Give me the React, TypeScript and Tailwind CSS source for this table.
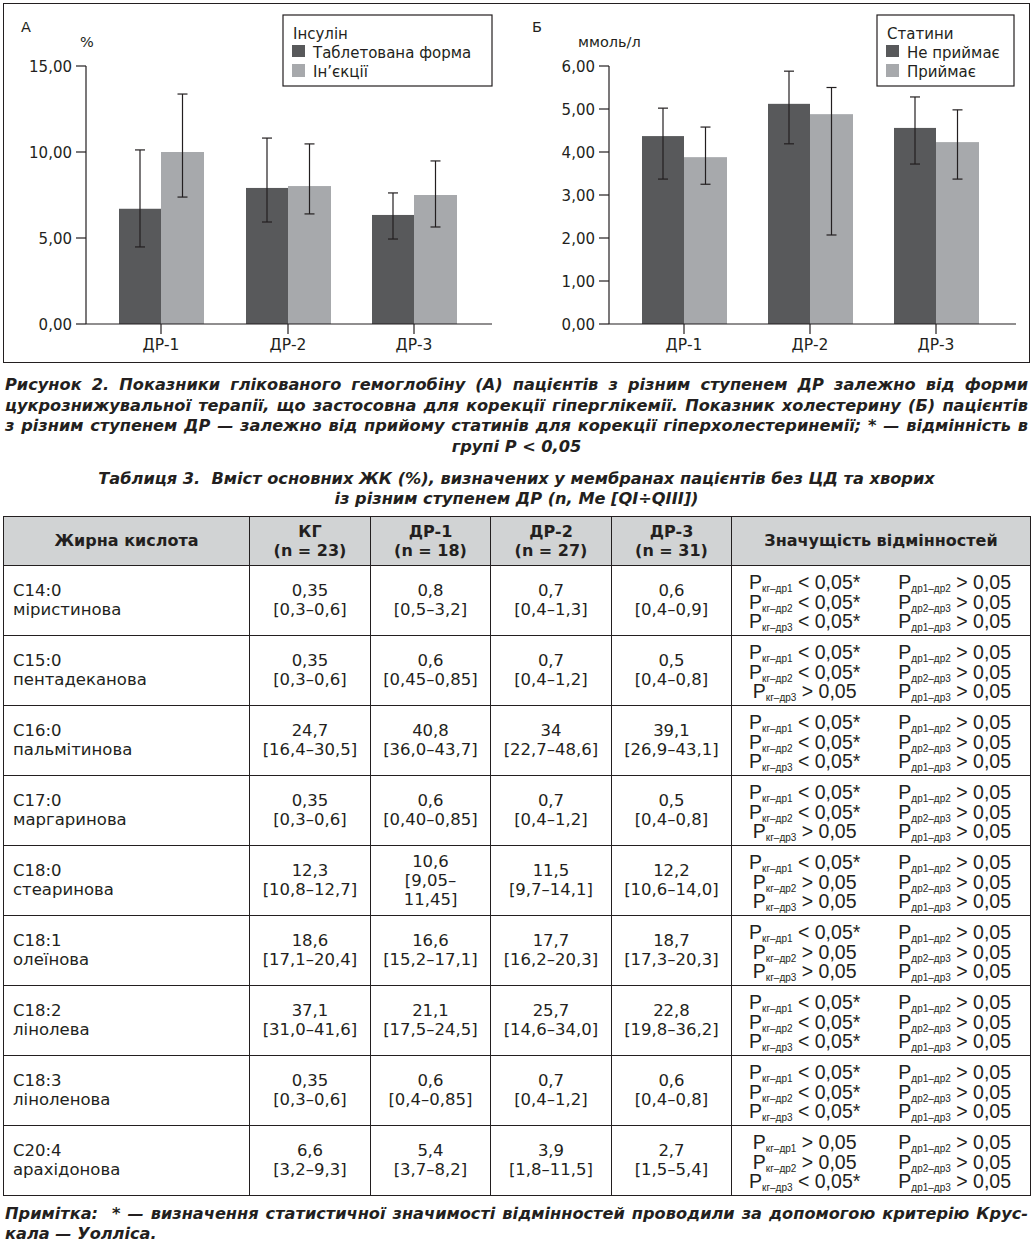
import React from 'react';

const INK = '#231f20';
const DARK = '#58595b';
const LIGHT = '#a7a9ac';

type Group = {
  label: string;
  c: number;
  a: number;
  b: number;
  ea: [number, number];
  eb: [number, number];
};

type ChartProps = {
  x0: number;
  width: number;
  axisX: number;
  axisEnd: number;
  max: number;
  step: number;
  groups: Group[];
  letter: string;
  letterX: number;
  unit: string;
  unitX: number;
  legend: { x: number; w: number; title: string; items: [string, string] };
};

const Y0 = 324;
const YTOP = 66;

function BarChart({ x0, width, axisX, axisEnd, max, step, groups, letter, letterX, unit, unitX, legend }: ChartProps) {
  const sy = (v: number) => Y0 - (v / max) * (Y0 - YTOP);
  const ticks: number[] = [];
  for (let v = 0; v <= max + 0.001; v += step) ticks.push(v);

  const errorBar = (x: number, [hi, lo]: [number, number], key: string) => (
    <g key={key} stroke={INK} strokeWidth={1.2}>
      <line x1={x} y1={sy(hi)} x2={x} y2={sy(lo)} />
      <line x1={x - 5} y1={sy(hi)} x2={x + 5} y2={sy(hi)} />
      <line x1={x - 5} y1={sy(lo)} x2={x + 5} y2={sy(lo)} />
    </g>
  );

  return (
    <svg width={width} height={357} viewBox={`${x0} 4 ${width} 357`} className="block" fontFamily="'DejaVu Sans', Verdana, sans-serif" fill={INK}>
      <text x={letterX} y={32} fontSize={14.5}>{letter}</text>
      <text x={unitX} y={47} fontSize={14.5}>{unit}</text>

      {groups.map((g) => (
        <g key={g.label}>
          <rect x={g.c - 42} y={sy(g.a)} width={42} height={Y0 - sy(g.a)} fill={DARK} />
          <rect x={g.c} y={sy(g.b)} width={43} height={Y0 - sy(g.b)} fill={LIGHT} />
        </g>
      ))}
      {groups.map((g) => errorBar(g.c - 21, g.ea, g.label + 'a'))}
      {groups.map((g) => errorBar(g.c + 21.5, g.eb, g.label + 'b'))}

      {/* axes */}
      <g stroke={INK} strokeWidth={1.2}>
        <line x1={axisX} y1={YTOP} x2={axisX} y2={Y0} />
        <line x1={axisX} y1={Y0} x2={axisEnd} y2={Y0} />
        {ticks.map((v) => (
          <line key={v} x1={axisX - 10} y1={sy(v)} x2={axisX} y2={sy(v)} />
        ))}
        {groups.map((g) => (
          <line key={g.label} x1={g.c} y1={Y0} x2={g.c} y2={Y0 + 10} />
        ))}
      </g>
      {ticks.map((v) => (
        <text key={v} x={axisX - 14} y={sy(v) + 6} fontSize={15} textAnchor="end">
          {v.toFixed(2).replace('.', ',')}
        </text>
      ))}
      {groups.map((g) => (
        <text key={g.label} x={g.c} y={350} fontSize={15.5} textAnchor="middle">{g.label}</text>
      ))}

      {/* legend */}
      <rect x={legend.x} y={15} width={legend.w} height={71} fill="white" stroke={INK} strokeWidth={1.2} />
      <text x={legend.x + 10} y={39} fontSize={15}>{legend.title}</text>
      <rect x={legend.x + 9} y={45} width={13} height={12} fill={DARK} />
      <text x={legend.x + 30} y={58} fontSize={15}>{legend.items[0]}</text>
      <rect x={legend.x + 9} y={64} width={13} height={13} fill={LIGHT} />
      <text x={legend.x + 30} y={77} fontSize={15}>{legend.items[1]}</text>
    </svg>
  );
}

const groupsA: Group[] = [
  { label: 'ДР-1', c: 161, a: 6.7, b: 10.0, ea: [10.12, 4.48], eb: [13.37, 7.38] },
  { label: 'ДР-2', c: 288, a: 7.91, b: 8.02, ea: [10.81, 5.93], eb: [10.47, 6.4] },
  { label: 'ДР-3', c: 414, a: 6.34, b: 7.5, ea: [7.62, 4.94], eb: [9.48, 5.64] },
];

const groupsB: Group[] = [
  { label: 'ДР-1', c: 684, a: 4.37, b: 3.88, ea: [5.02, 3.37], eb: [4.58, 3.25] },
  { label: 'ДР-2', c: 810, a: 5.12, b: 4.88, ea: [5.88, 4.19], eb: [5.5, 2.07] },
  { label: 'ДР-3', c: 936, a: 4.56, b: 4.23, ea: [5.28, 3.72], eb: [4.98, 3.37] },
];

type Sign = '<' | '>';

type Row = {
  code: string;
  name: string;
  values: string[][];
  p: [Sign, Sign, Sign];
};

const rows: Row[] = [
  { code: 'С14:0', name: 'міристинова', values: [['0,35', '[0,3–0,6]'], ['0,8', '[0,5–3,2]'], ['0,7', '[0,4–1,3]'], ['0,6', '[0,4–0,9]']], p: ['<', '<', '<'] },
  { code: 'С15:0', name: 'пентадеканова', values: [['0,35', '[0,3–0,6]'], ['0,6', '[0,45–0,85]'], ['0,7', '[0,4–1,2]'], ['0,5', '[0,4–0,8]']], p: ['<', '<', '>'] },
  { code: 'С16:0', name: 'пальмітинова', values: [['24,7', '[16,4–30,5]'], ['40,8', '[36,0–43,7]'], ['34', '[22,7–48,6]'], ['39,1', '[26,9–43,1]']], p: ['<', '<', '<'] },
  { code: 'С17:0', name: 'маргаринова', values: [['0,35', '[0,3–0,6]'], ['0,6', '[0,40–0,85]'], ['0,7', '[0,4–1,2]'], ['0,5', '[0,4–0,8]']], p: ['<', '<', '>'] },
  { code: 'С18:0', name: 'стеаринова', values: [['12,3', '[10,8–12,7]'], ['10,6', '[9,05–', '11,45]'], ['11,5', '[9,7–14,1]'], ['12,2', '[10,6–14,0]']], p: ['<', '>', '>'] },
  { code: 'С18:1', name: 'олеїнова', values: [['18,6', '[17,1–20,4]'], ['16,6', '[15,2–17,1]'], ['17,7', '[16,2–20,3]'], ['18,7', '[17,3–20,3]']], p: ['<', '>', '>'] },
  { code: 'С18:2', name: 'лінолева', values: [['37,1', '[31,0–41,6]'], ['21,1', '[17,5–24,5]'], ['25,7', '[14,6–34,0]'], ['22,8', '[19,8–36,2]']], p: ['<', '<', '<'] },
  { code: 'С18:3', name: 'ліноленова', values: [['0,35', '[0,3–0,6]'], ['0,6', '[0,4–0,85]'], ['0,7', '[0,4–1,2]'], ['0,6', '[0,4–0,8]']], p: ['<', '<', '<'] },
  { code: 'С20:4', name: 'арахідонова', values: [['6,6', '[3,2–9,3]'], ['5,4', '[3,7–8,2]'], ['3,9', '[1,8–11,5]'], ['2,7', '[1,5–5,4]']], p: ['>', '>', '<'] },
];

const PLine = ({ sub, sign }: { sub: string; sign: Sign }) => (
  <div className="h-[19.3px]">
    P<span className="relative top-[3px] text-[10px] leading-[0]">{sub}</span> {sign} 0,05{sign === '<' ? '*' : ''}
  </div>
);

const cell = 'border border-[#231f20] align-middle';

export default function App() {
  return (
    <div className="w-[1033px] min-h-[1245px] bg-white pt-[3px] pb-[8px] text-[#231f20] font-['DejaVu_Sans',Verdana,sans-serif]">
      {/* Figure 2 */}
      <div className="ml-[3px] flex h-[360px] w-[1027px] border border-[#231f20]">
        <BarChart
          x0={4}
          width={512}
          axisX={86}
          axisEnd={492}
          max={15}
          step={5}
          groups={groupsA}
          letter="А"
          letterX={21}
          unit="%"
          unitX={80}
          legend={{ x: 283, w: 209, title: 'Інсулін', items: ['Таблетована форма', 'Ін’єкції'] }}
        />
        <BarChart
          x0={516}
          width={513}
          axisX={609}
          axisEnd={1016}
          max={6}
          step={1}
          groups={groupsB}
          letter="Б"
          letterX={532}
          unit="ммоль/л"
          unitX={578}
          legend={{ x: 877, w: 137, title: 'Статини', items: ['Не приймає', 'Приймає'] }}
        />
      </div>

      {/* caption */}
      <div className="mt-[12px] px-[5px] text-[16.2px] font-bold italic leading-[20.7px]">
        <p className="whitespace-nowrap text-justify [text-align-last:justify]">
          Рисунок 2. Показники глікованого гемоглобіну (А) пацієнтів з різним ступенем ДР залежно від форми
          <br />
          цукрознижувальної терапії, що застосовна для корекції гіперглікемії. Показник холестерину (Б) пацієнтів
          <br />
          з різним ступенем ДР — залежно від прийому статинів для корекції гіперхолестеринемії; * — відмінність в
        </p>
        <p className="text-center">групі Р &lt; 0,05</p>
      </div>

      <div className="mt-[11px] text-center text-[16.2px] font-bold italic leading-[20.5px]">
        <p>Таблиця 3.&nbsp; Вміст основних ЖК (%), визначених у мембранах пацієнтів без ЦД та хворих</p>
        <p>із різним ступенем ДР (n, Ме [QI÷QIII])</p>
      </div>

      {/* table */}
      <table className="mt-[6px] ml-[3px] w-[1027px] table-fixed border-collapse text-[16.5px] leading-[19px]">
        <colgroup>
          <col className="w-[246px]" />
          <col className="w-[121px]" />
          <col className="w-[120px]" />
          <col className="w-[121px]" />
          <col className="w-[120px]" />
          <col className="w-[299px]" />
        </colgroup>
        <thead>
          <tr className="h-[49px] bg-[#d1d3d4] text-[16px]">
            <th className={cell + ' font-bold'}>Жирна кислота</th>
            <th className={cell + ' font-bold'}>КГ<br />(n = 23)</th>
            <th className={cell + ' font-bold'}>ДР-1<br />(n = 18)</th>
            <th className={cell + ' font-bold'}>ДР-2<br />(n = 27)</th>
            <th className={cell + ' font-bold'}>ДР-3<br />(n = 31)</th>
            <th className={cell + ' font-bold'}>Значущість відмінностей</th>
          </tr>
        </thead>
        <tbody>
          {rows.map((r) => (
            <tr key={r.code} className="h-[70px]">
              <td className={cell + ' pl-[9px]'}>
                {r.code}
                <br />
                {r.name}
              </td>
              {r.values.map((v, i) => (
                <td key={i} className={cell + ' text-center'}>
                  {v.map((line, j) => (
                    <div key={j}>{line}</div>
                  ))}
                </td>
              ))}
              <td className={cell}>
                <div className="flex justify-center gap-[38px] pt-[4px] pr-[2px] font-['Liberation_Sans',Arial,sans-serif] text-[19.5px] leading-[19px]">
                  <div className="text-center">
                    <PLine sub="кг–др1" sign={r.p[0]} />
                    <PLine sub="кг–др2" sign={r.p[1]} />
                    <PLine sub="кг–др3" sign={r.p[2]} />
                  </div>
                  <div className="text-center">
                    <PLine sub="др1–др2" sign=">" />
                    <PLine sub="др2–др3" sign=">" />
                    <PLine sub="др1–др3" sign=">" />
                  </div>
                </div>
              </td>
            </tr>
          ))}
        </tbody>
      </table>

      {/* note */}
      <div className="mt-[8px] px-[5px] text-[16.2px] font-bold italic leading-[20px]">
        <p className="whitespace-nowrap text-justify [text-align-last:justify]">
          Примітка:&nbsp; * — визначення статистичної значимості відмінностей проводили за допомогою критерію Крус-
        </p>
        <p>кала — Уолліса.</p>
      </div>
    </div>
  );
}
